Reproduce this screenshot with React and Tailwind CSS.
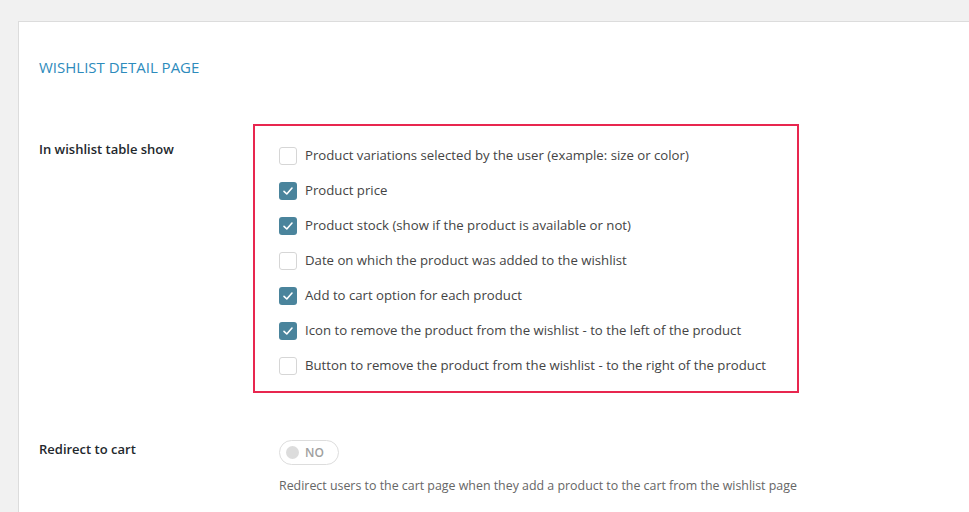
import React from "react";

const options = [
  { label: "Product variations selected by the user (example: size or color)", checked: false },
  { label: "Product price", checked: true },
  { label: "Product stock (show if the product is available or not)", checked: true },
  { label: "Date on which the product was added to the wishlist", checked: false },
  { label: "Add to cart option for each product", checked: true },
  { label: "Icon to remove the product from the wishlist - to the left of the product", checked: true },
  { label: "Button to remove the product from the wishlist - to the right of the product", checked: false },
];

function Checkbox({ checked }) {
  if (checked) {
    return (
      <span className="w-[18px] h-[18px] rounded-[3px] bg-[#4a849c] flex items-center justify-center shrink-0">
        <svg width="12" height="12" viewBox="0 0 12 12" fill="none">
          <path d="M2 6.3 L4.8 9 L10 3" stroke="white" strokeWidth="1.6" strokeLinecap="round" strokeLinejoin="round" />
        </svg>
      </span>
    );
  }
  return <span className="w-[18px] h-[18px] rounded-[3px] border border-[#d6d6d6] bg-white shrink-0" />;
}

function App() {
  return (
    <div className="w-[969px] h-[512px] overflow-hidden bg-[#f1f1f1] pt-[21px] pl-[18px] font-['Open_Sans',sans-serif] text-[13px]">
      <div className="bg-white border border-r-0 border-b-0 border-[#dcdcdc] h-full pl-[20px]">
        {/* title */}
        <h2 className="pt-[35px] text-[15px] leading-[20px] text-[#2d8bbc] uppercase">Wishlist detail page</h2>

        {/* in wishlist table show */}
        <div className="flex mt-[47px]">
          <p className="w-[214px] pt-[16px] font-semibold text-[#23282d] leading-[18px]">In wishlist table show</p>
          <div className="w-[546px] border-2 border-[#e8264f] pl-[24px] pt-[12px] pb-[8px]">
            {options.map((o) => (
              <div key={o.label} className="h-[35px] flex items-center gap-[8px] text-[13.2px] text-[#444]">
                <Checkbox checked={o.checked} />
                <span>{o.label}</span>
              </div>
            ))}
          </div>
        </div>

        {/* redirect to cart */}
        <div className="flex mt-[47px]">
          <p className="w-[240px] font-semibold text-[#23282d] leading-[18px]">Redirect to cart</p>
          <div>
            <div className="w-[60px] h-[25px] rounded-full border border-[#dddddd] bg-white flex items-center pl-[6px] gap-[6px]">
              <span className="w-[13px] h-[13px] rounded-full bg-[#dcdcdc]" />
              <span className="text-[12px] font-semibold text-[#a0a0a0]">NO</span>
            </div>
            <p className="mt-[12px] text-[12.4px] text-[#666]">
              Redirect users to the cart page when they add a product to the cart from the wishlist page
            </p>
          </div>
        </div>
      </div>
    </div>
  );
}

export default App;
